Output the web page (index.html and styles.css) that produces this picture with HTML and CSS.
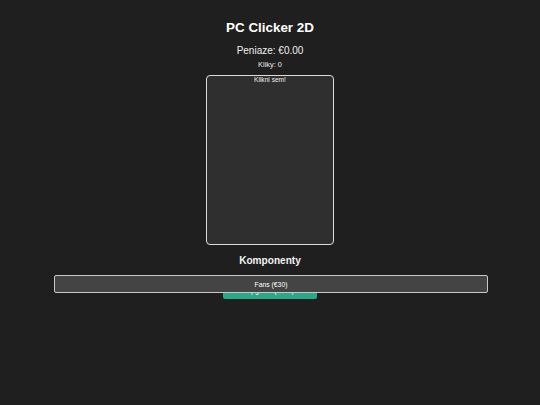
FILE: index.html
```html
<!DOCTYPE html>
<html>
<head>
<meta charset="utf-8">
<link rel="stylesheet" href="styles.css">
</head>
<body>
<main class="app">
  <h1 class="title">PC Clicker 2D</h1>
  <div class="money">Peniaze: €0.00</div>
  <div class="clicks">Kliky: 0</div>
  <div class="pc">Klikni sem!</div>
  <h2 class="section">Komponenty</h2>
  <div class="shop">
    <button class="upgrade">Upgrade (€100)</button>
    <button class="item">Fans (€30)</button>
  </div>
</main>
</body>
</html>
```

FILE: styles.css
```css
html, body {
  margin: 0;
  padding: 0;
  background: #1f1f1f;
  color: #ffffff;
  font-family: "Liberation Sans", Arial, sans-serif;
}
.app {
  display: flex;
  flex-direction: column;
  align-items: center;
  padding-top: 20px;
}
.title {
  margin: 0;
  font-size: 13.4px;
  line-height: 16px;
  font-weight: bold;
}
.money {
  margin-top: 9px;
  font-size: 10px;
  line-height: 12px;
  color: #f0f0f0;
}
.clicks {
  margin-top: 3px;
  font-size: 7.4px;
  line-height: 9px;
  color: #eeeeee;
}
.pc {
  margin-top: 6px;
  box-sizing: border-box;
  width: 128px;
  height: 170px;
  border: 1.5px solid #dcdcdc;
  border-radius: 4px;
  background: #2f2f2f;
  font-size: 6.6px;
  line-height: 7px;
  text-align: center;
  color: #eeeeee;
}
.section {
  margin: 10px 0 0;
  font-size: 10.1px;
  line-height: 12px;
  font-weight: bold;
  color: #f2f2f2;
}
.shop {
  position: relative;
  width: 434px;
  margin-top: 8px;
  margin-left: 2px;
  display: flex;
  justify-content: center;
}
.upgrade {
  margin-top: 6px;
  width: 94px;
  height: 18px;
  margin-left: -2px;
  border: none;
  border-radius: 2px;
  background: #2aa888;
  color: #ffffff;
  font-family: "Liberation Sans", Arial, sans-serif;
  font-size: 6.8px;
  padding: 0;
}
.item {
  position: absolute;
  top: 0;
  left: 0;
  box-sizing: border-box;
  width: 434px;
  height: 18px;
  border: 1px solid #c8c8c8;
  border-radius: 2px;
  background: #444444;
  color: #ffffff;
  font-family: "Liberation Sans", Arial, sans-serif;
  font-size: 6.8px;
  padding: 0;
}
```
